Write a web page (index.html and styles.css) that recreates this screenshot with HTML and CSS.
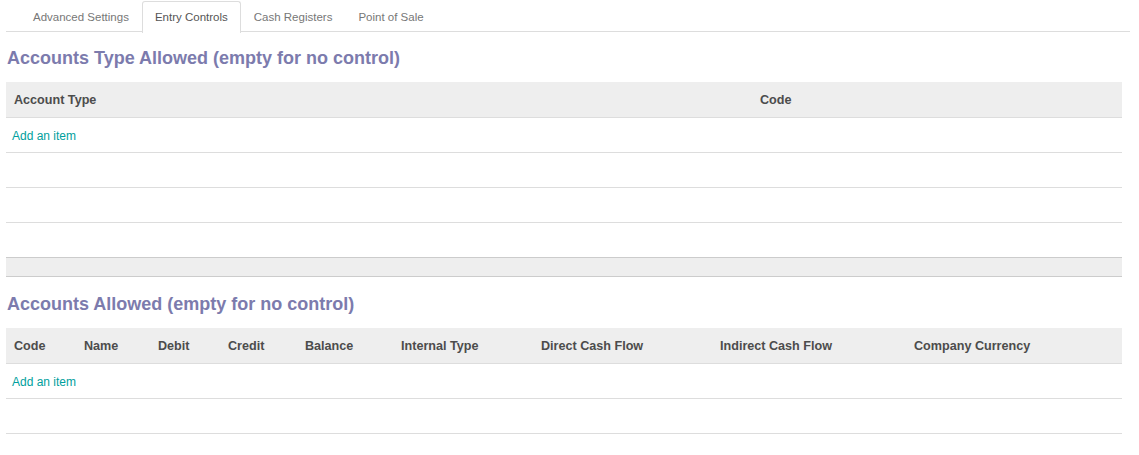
FILE: index.html
```html
<!DOCTYPE html>
<html>
<head>
<meta charset="utf-8">
<link rel="stylesheet" href="styles.css">
</head>
<body>
<div class="page">
  <ul class="tabs">
    <li class="tab">Advanced Settings</li>
    <li class="tab active">Entry Controls</li>
    <li class="tab">Cash Registers</li>
    <li class="tab">Point of Sale</li>
  </ul>

  <h2 class="sep">Accounts Type Allowed (empty for no control)</h2>
  <table class="list">
    <thead>
      <tr><th class="c-type">Account Type</th><th>Code</th></tr>
    </thead>
    <tbody>
      <tr><td colspan="2" class="add"><a href="#">Add an item</a></td></tr>
      <tr><td colspan="2"></td></tr>
      <tr><td colspan="2"></td></tr>
      <tr><td colspan="2"></td></tr>
    </tbody>
    <tfoot>
      <tr><td colspan="2"></td></tr>
    </tfoot>
  </table>

  <h2 class="sep sep2">Accounts Allowed (empty for no control)</h2>
  <table class="list list2">
    <thead>
      <tr>
        <th class="w-code">Code</th>
        <th class="w-name">Name</th>
        <th class="w-debit">Debit</th>
        <th class="w-credit">Credit</th>
        <th class="w-bal">Balance</th>
        <th class="w-int">Internal Type</th>
        <th class="w-dir">Direct Cash Flow</th>
        <th class="w-ind">Indirect Cash Flow</th>
        <th>Company Currency</th>
      </tr>
    </thead>
    <tbody>
      <tr><td colspan="9" class="add"><a href="#">Add an item</a></td></tr>
      <tr><td colspan="9"></td></tr>
    </tbody>
  </table>
</div>
</body>
</html>
```

FILE: styles.css
```css
html, body {
  margin: 0;
  padding: 0;
  background: #fff;
}
body {
  font-family: "Liberation Sans", Arial, sans-serif;
  font-size: 13px;
  color: #4c4c4c;
}
.page {
  padding-left: 6px;
  width: 1124px;
}
.tabs {
  list-style: none;
  margin: 0;
  padding: 1px 0 0 14px;
  display: flex;
  border-bottom: 1px solid #ddd;
  height: 30px;
}
.tab {
  font-size: 11.5px;
  color: #777;
  padding: 0 12px;
  line-height: 30px;
  height: 30px;
  border: 1px solid transparent;
  border-bottom: none;
  border-radius: 3px 3px 0 0;
}
.tab.active {
  color: #555;
  border-color: #ddd;
  background: #fff;
  height: 31px;
  margin-bottom: -1px;
}
.sep {
  margin: 0;
  font-size: 18px;
  font-weight: bold;
  color: #7c7bad;
  padding-left: 1px;
  height: 50px;
  line-height: 52px;
}
.sep2 {
  height: 51px;
  line-height: 54px;
}
.list {
  width: 1116px;
  border-collapse: collapse;
  table-layout: fixed;
}
.list th {
  background: #eee;
  text-align: left;
  font-weight: bold;
  font-size: 12.6px;
  color: #4c4c4c;
  height: 35px;
  padding: 0 0 0 8px;
  border-bottom: 1px solid #ddd;
}
.list th.c-type { width: 738px; }
.list td {
  height: 34px;
  padding: 0;
  border-bottom: 1px solid #ddd;
}
.list td.add {
  padding: 2px 0 0 6px;
  height: 32px;
  font-size: 12px;
}
.list td.add a {
  color: #00a09d;
  text-decoration: none;
}
.list tfoot td {
  background: #eee;
  height: 18px;
  border-bottom: 1px solid #ccc;
}
.list tbody tr:last-child td {
  border-bottom: 1px solid #ccc;
}
.list2 tbody tr:last-child td {
  border-bottom: 1px solid #ddd;
}
.w-code { width: 62px; }
.w-name { width: 66px; }
.w-debit { width: 62px; }
.w-credit { width: 69px; }
.w-bal { width: 88px; }
.w-int { width: 132px; }
.w-dir { width: 171px; }
.w-ind { width: 186px; }
```
